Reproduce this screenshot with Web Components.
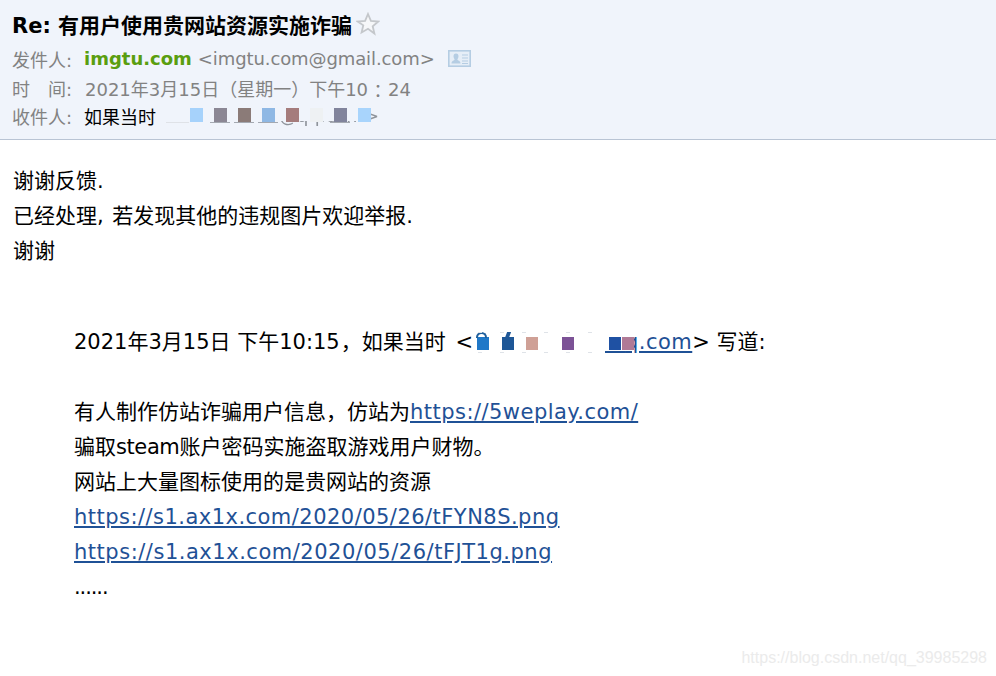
<!DOCTYPE html>
<html>
<head>
<meta charset="utf-8">
<style>
  html, body { margin: 0; padding: 0; height: 100%; background: #fff; overflow: hidden; }
  body { font-family: "DejaVu Sans", "Noto Sans CJK SC", sans-serif; }
</style>
</head>
<body>
<mail-view>
  <mail-header slot="header">
    <span slot="subject">Re: 有用户使用贵网站资源实施诈骗</span>
    <meta-row label="发件人:">
      <b style="color:#5a9e0f;font-weight:700">imgtu.com</b>
      <span style="letter-spacing:-.1px;margin-left:-1px">&lt;imgtu.com@gmail.com&gt;</span>
      <card-icon></card-icon>
    </meta-row>
    <meta-row label="时&emsp;间:"><span style="margin-left:1px">2021年3月15日（星期一）下午10<span style="font-family:'Noto Sans CJK TC',sans-serif;position:relative;top:2px;padding:0 1px">：</span>24</span></meta-row>
    <meta-row label="收件人:" style="margin-top:-1px">
      <span style="color:#000">如果当时</span>
      <redact-text colors="#a6d2fb,#8b8794,#8b7b78,#8fb8e4,#a57c7c,#eef1f3,#81849c,#a8d4fc" gap="24">@qq.com&gt;</redact-text>
    </meta-row>
  </mail-header>
  <mail-line>谢谢反馈.</mail-line>
  <mail-line style="word-spacing:2px">已经处理, 若发现其他的违规图片欢迎举报.</mail-line>
  <mail-line>谢谢</mail-line>
  <mail-quote>
    <mail-line>2021年3月15日 下午10:15<span style="margin-left:1px">，</span>如果当时<span style="margin-left:3px"> </span>&lt;<quote-mask></quote-mask><a-link>q.com</a-link>&gt; 写道:</mail-line>
    <mail-line></mail-line>
    <mail-line>有人制作仿站诈骗用户信息，仿站为<a-link>https://5weplay.com/</a-link></mail-line>
    <mail-line>骗取<span style="letter-spacing:-.4px">steam</span>账户密码实施盗取游戏用户财物。</mail-line>
    <mail-line>网站上大量图标使用的是贵网站的资源</mail-line>
    <mail-line><a-link>https://s1.ax1x.com/2020/05/26/tFYN8S.png</a-link></mail-line>
    <mail-line><a-link style="letter-spacing:.52px">https://s1.ax1x.com/2020/05/26/tFJT1g.png</a-link></mail-line>
    <mail-line style="letter-spacing:-1.100px">......</mail-line>
  </mail-quote>
  <water-mark>https://blog.csdn.net/qq_39985298</water-mark>
</mail-view>

<script>
customElements.define('mail-view', class MailView extends HTMLElement {
  constructor() {
    super();
    this.attachShadow({mode: 'open'});
    this.shadowRoot.innerHTML = this.template;
  }
  get template() {
    return `<style>
      :host {
        display: flex;
        flex-direction: column;
        position: relative;
        width: 996px;
        height: 676px;
        color: #000;
      }
      main {
        padding: 24px 14px 0 13px;
      }
    </style>
    <slot name="header"></slot>
    <main><slot></slot></main>
    `
  }
});

customElements.define('mail-header', class MailHeader extends HTMLElement {
  constructor() {
    super();
    this.attachShadow({mode: 'open'});
    this.shadowRoot.innerHTML = this.template;
  }
  get template() {
    return `<style>
      :host {
        display: block;
        box-sizing: border-box;
        height: 140px;
        padding: 7px 12px 0;
        background: #f0f4fb;
        border-bottom: 1px solid #b9c4d4;
      }
      .subject {
        display: flex;
        align-items: center;
        gap: 4px;
        height: 34px;
        margin-bottom: 3px;
        font-size: 21px;
        font-weight: 700;
        color: #000;
      }
      svg { display: block; }
    </style>
    <div class="subject">
      <slot name="subject"></slot>
      <svg width="24" height="24" viewBox="0 0 24 24">
        <path d="M12 2l2.900 6.900 7.400.6-5.600 4.800 1.700 7.200L12 16.800l-6.400 3.700 1.700-7.200L1.700 9.500l7.400-.6z" fill="#f6f7f9" stroke="#c4c7cb" stroke-width="1.800"/>
      </svg>
    </div>
    <slot></slot>
    `
  }
});

customElements.define('meta-row', class MetaRow extends HTMLElement {
  constructor() {
    super();
    this.attachShadow({mode: 'open'});
    this.shadowRoot.innerHTML = this.template;
    this.shadowRoot.querySelector('.label').textContent = this.getAttribute('label');
  }
  get template() {
    return `<style>
      :host {
        display: flex;
        align-items: center;
        gap: 8px;
        height: 29px;
        font-size: 18px;
        color: #828282;
        white-space: nowrap;
      }
      .label { width: 64px; }
      ::slotted(b) { margin-right: -1px; }
    </style>
    <span class="label"></span>
    <slot></slot>
    `
  }
});

customElements.define('card-icon', class CardIcon extends HTMLElement {
  constructor() {
    super();
    this.attachShadow({mode: 'open'});
    this.shadowRoot.innerHTML = this.template;
  }
  get template() {
    return `<style>
      :host { display: block; margin-left: 5px; }
      svg { display: block; }
    </style>
    <svg width="23" height="17" viewBox="0 0 23 17">
      <rect x=".8" y=".8" width="21.400" height="15.400" fill="#e6eef7" stroke="#b5cde3" stroke-width="1.600"/>
      <path d="M8 3.500c1.800 0 2.500 1.200 2.500 2.700S9.600 9 9.300 9.600c.3 1 3.200 1.200 3.200 3.900h-9c0-2.700 2.900-2.900 3.200-3.900C6.400 9 5.500 7.700 5.500 6.200S6.200 3.500 8 3.500z" fill="#b5cde3"/>
      <path d="M14 5h6M14 8h6M14 11h6M14 13.500h6" stroke="#b5cde3"/>
    </svg>
    `
  }
});

customElements.define('redact-text', class RedactText extends HTMLElement {
  constructor() {
    super();
    this.attachShadow({mode: 'open'});
    this.shadowRoot.innerHTML = this.template;
    const marks = this.shadowRoot.querySelector('.marks');
    const gap = +this.getAttribute('gap');
    this.getAttribute('colors').split(',').forEach((color, i) => {
      const mark = document.createElement('i');
      mark.style.background = color;
      mark.style.left = (i * gap) + 'px';
      marks.appendChild(mark);
    });
  }
  get template() {
    return `<style>
      :host {
        display: block;
        position: relative;
        width: 216px;
        height: 22px;
        margin-left: -1px;
        color: #828282;
        text-align: right;
        line-height: 22px;
      }
      .text { color: #8f949b; filter: blur(.5px); }
      .veil {
        position: absolute;
        left: 20px;
        right: 11px;
        top: 3px;
        height: 13px;
        background: #f0f4fb;
      }
      .marks { position: absolute; left: 27px; top: 3px; }
      i {
        position: absolute;
        top: 0;
        width: 13px;
        height: 14px;
        filter: blur(.4px);
      }
      i::after {
        content: "";
        position: absolute;
        left: -4px;
        right: -3px;
        top: 14px;
        height: 1px;
        background: #a4a9b1;
      }
      i:nth-child(1)::after {
        left: -24px;
        right: 14px;
        background: #dfe2e7;
      }
      i:nth-child(5)::after, i:nth-child(6)::after, i:nth-child(8)::after { display: none; }
    </style>
    <span class="text"><slot></slot></span>
    <div class="veil"></div>
    <div class="marks"></div>
    `
  }
});

customElements.define('mail-line', class MailLine extends HTMLElement {
  constructor() {
    super();
    this.attachShadow({mode: 'open'});
    this.shadowRoot.innerHTML = this.template;
  }
  get template() {
    return `<style>
      :host {
        display: block;
        height: 35px;
        font-size: 21px;
        line-height: 35px;
        white-space: nowrap;
      }
    </style>
    <slot></slot>
    `
  }
});

customElements.define('mail-quote', class MailQuote extends HTMLElement {
  constructor() {
    super();
    this.attachShadow({mode: 'open'});
    this.shadowRoot.innerHTML = this.template;
  }
  get template() {
    return `<style>
      :host {
        display: block;
        margin: 56px 0 0 61px;
      }
    </style>
    <slot></slot>
    `
  }
});

customElements.define('a-link', class ALink extends HTMLElement {
  constructor() {
    super();
    this.attachShadow({mode: 'open'});
    this.shadowRoot.innerHTML = `<style>
      :host {
        display: inline;
        color: #1f5196;
        letter-spacing: .47px;
        text-decoration: underline;
      }
    </style><slot></slot>`;
  }
});

customElements.define('quote-mask', class QuoteMask extends HTMLElement {
  constructor() {
    super();
    this.attachShadow({mode: 'open'});
    this.shadowRoot.innerHTML = `<style>
      :host {
        display: inline-block;
        position: relative;
        width: 152px;
        height: 22px;
        vertical-align: -5px;
      }
      i {
        position: absolute;
        top: 5px;
        width: 12px;
        height: 13px;
      }
      .arc {
        position: absolute;
        left: -1px;
        top: -5px;
        width: 11px;
        height: 6px;
        box-sizing: border-box;
        border: 2px solid #1f5f9c;
        border-bottom: none;
        border-radius: 6px 6px 0 0;
      }
      .tick {
        position: absolute;
        left: 4px;
        top: -5px;
        width: 4px;
        height: 6px;
        background: #1e5797;
        transform: skewX(-20deg);
      }
      .dots {
        position: absolute;
        left: 5px;
        width: 130px;
        height: 1px;
        background: repeating-linear-gradient(90deg, #dfe3e8 0 4px, transparent 4px 22px);
      }
      .rule {
        position: absolute;
        left: 132px;
        right: 0;
        top: 19px;
        height: 2px;
        background: #1f5196;
      }
    </style><i style="left:4px;background:#1f78c8"><span class="arc"></span></i><i style="left:29px;background:#1e5797"><span class="tick"></span></i><i style="left:53px;background:#cfa096"></i><i style="left:89px;background:#7c5296"></i><i style="left:136px;background:#1f51a3"></i><i style="left:149px;background:#b07a96;z-index:1"></i><div class="dots" style="top:0"></div><div class="dots" style="top:20px"></div><div class="rule"></div>`;
  }
});

customElements.define('water-mark', class WaterMark extends HTMLElement {
  constructor() {
    super();
    this.attachShadow({mode: 'open'});
    this.shadowRoot.innerHTML = this.template;
  }
  get template() {
    return `<style>
      :host {
        position: absolute;
        right: 9px;
        bottom: 8px;
        font-family: "Liberation Sans", sans-serif;
        font-size: 16px;
        line-height: 20px;
        color: #ebebeb;
        white-space: nowrap;
      }
    </style>
    <slot></slot>
    `
  }
});
</script>
</body>
</html>
